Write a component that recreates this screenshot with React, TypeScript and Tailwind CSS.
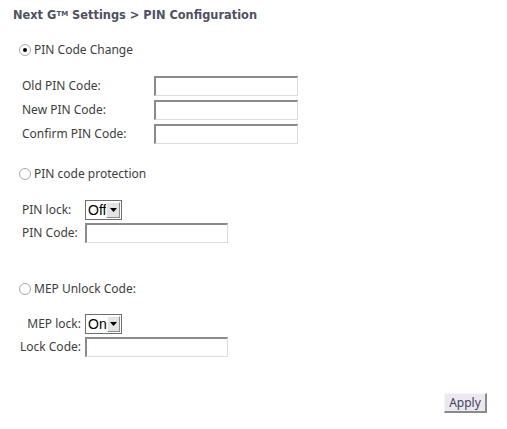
import React from 'react'

const FONT = { fontFamily: '"Noto Sans", "Open Sans", sans-serif' }

function Radio({ checked }: { checked?: boolean }) {
  return (
    <span className="relative inline-block w-[12px] h-[12px] rounded-full border border-[#a8a8a8] bg-white shrink-0">
      {checked && (
        <span className="absolute left-[3px] top-[3px] w-[4px] h-[4px] rounded-full bg-black" />
      )}
    </span>
  )
}

function TextBox({ width }: { width: string }) {
  return (
    <div
      className={`${width} h-[20px] bg-white border-t-2 border-l-2 border-r border-b border-t-[#8a8a8a] border-l-[#8a8a8a] border-r-[#dcdcdc] border-b-[#dcdcdc]`}
    />
  )
}

function Select({ value }: { value: string }) {
  return (
    <div className="flex items-stretch w-[37px] h-[20px] border border-[#6e6e6e] bg-white">
      <span className="flex-1 pl-[2px] text-[14px] leading-[18px] text-black" style={{ fontFamily: '"Liberation Sans", Arial, sans-serif' }}>
        {value}
      </span>
      <span className="w-[15px] my-[1px] mr-[1px] flex items-center justify-center bg-[#e4e4e4] border-t border-l border-white border-r border-b border-r-[#8c8c8c] border-b-[#8c8c8c]">
        <svg width="7" height="4" viewBox="0 0 7 4">
          <path d="M0 0h7L3.5 4z" fill="#000" />
        </svg>
      </span>
    </div>
  )
}

export default function App() {
  return (
    <div className="w-[507px] h-[429px] bg-white text-[12px] text-[#3d3d3d]" style={FONT}>
      <div
        className="pt-[8px] pl-[13px] h-[22px] font-bold text-[11.4px] leading-[14px] text-[#4f5061]"
        style={{ fontFamily: '"DejaVu Sans", Verdana, sans-serif' }}
      >
        Next G<sup className="text-[7px] relative -top-[3px]">TM</sup> Settings &gt; PIN Configuration
      </div>

      {/* PIN Code Change */}
      <div className="mt-[21px] ml-[19px] h-[14px] flex items-center gap-[3px]">
        <Radio checked />
        <span className="leading-[14px]">PIN Code Change</span>
      </div>
      <div className="mt-[19px] flex flex-col gap-[4px]">
        {['Old PIN Code:', 'New PIN Code:', 'Confirm PIN Code:'].map((label) => (
          <div key={label} className="flex items-center h-[20px]">
            <span className="w-[154px] pl-[22px]">{label}</span>
            <TextBox width="w-[144px]" />
          </div>
        ))}
      </div>

      {/* PIN code protection */}
      <div className="mt-[23px] ml-[19px] h-[14px] flex items-center gap-[3px]">
        <Radio />
        <span className="leading-[14px]">PIN code protection</span>
      </div>
      <div className="mt-[19px] flex items-center h-[20px]">
        <span className="w-[85px] pl-[22px]">PIN lock:</span>
        <Select value="Off" />
      </div>
      <div className="mt-[3px] flex items-center h-[20px]">
        <span className="w-[85px] pl-[22px]">PIN Code:</span>
        <TextBox width="w-[143px]" />
      </div>

      {/* MEP Unlock Code */}
      <div className="mt-[39px] ml-[19px] h-[14px] flex items-center gap-[3px]">
        <Radio />
        <span className="leading-[14px]">MEP Unlock Code:</span>
      </div>
      <div className="mt-[18px] flex items-center h-[20px]">
        <span className="w-[85px] pr-[4px] text-right">MEP lock:</span>
        <Select value="On" />
      </div>
      <div className="mt-[3px] flex items-center h-[20px]">
        <span className="w-[85px] pr-[4px] text-right">Lock Code:</span>
        <TextBox width="w-[143px]" />
      </div>

      <div className="mt-[36px] ml-[444px]">
        <button className="w-[43px] h-[20px] bg-[#ebe9ef] border-t border-l border-[#f7f7f7] border-r-2 border-b-2 border-r-[#8a8a8a] border-b-[#8a8a8a] text-[12px] leading-[16px] text-[#3f3f5a]">
          Apply
        </button>
      </div>
    </div>
  )
}
